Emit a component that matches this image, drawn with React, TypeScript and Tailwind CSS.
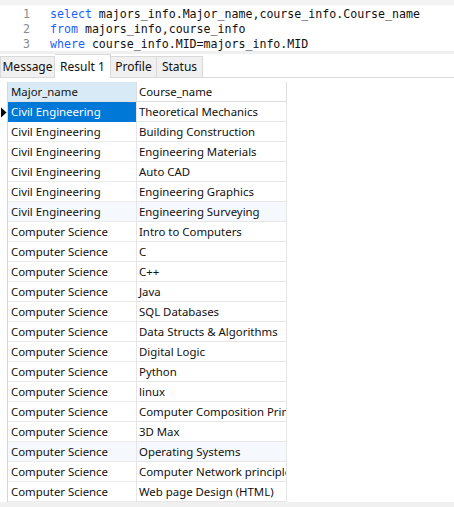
import React from "react";

const rows: [string, string][] = [
  ["Civil Engineering", "Theoretical Mechanics"],
  ["Civil Engineering", "Building Construction"],
  ["Civil Engineering", "Engineering Materials"],
  ["Civil Engineering", "Auto CAD"],
  ["Civil Engineering", "Engineering Graphics"],
  ["Civil Engineering", "Engineering Surveying"],
  ["Computer Science", "Intro to Computers"],
  ["Computer Science", "C"],
  ["Computer Science", "C++"],
  ["Computer Science", "Java"],
  ["Computer Science", "SQL Databases"],
  ["Computer Science", "Data Structs & Algorithms"],
  ["Computer Science", "Digital Logic"],
  ["Computer Science", "Python"],
  ["Computer Science", "linux"],
  ["Computer Science", "Computer Composition Principles"],
  ["Computer Science", "3D Max"],
  ["Computer Science", "Operating Systems"],
  ["Computer Science", "Computer Network principles"],
  ["Computer Science", "Web page Design (HTML)"],
];

const tinted = new Set([5, 17]);

export default function App() {
  const mono = { fontFamily: '"DejaVu Sans Mono", "Liberation Mono", monospace' };
  const ui = { fontFamily: '"Noto Sans", "Open Sans", sans-serif' };
  return (
    <div className="w-[454px] h-[507px] bg-white overflow-hidden flex flex-col" style={ui}>
      {/* editor */}
      <div className="h-[5px] bg-[#f3f3f3] shrink-0" />
      <div className="h-[46px] shrink-0 bg-white flex flex-col pt-[2px] text-[11.6px] leading-[15px]" style={mono}>
        {[
          [<span key="a"><span className="text-[#1a5fff]">select</span> majors_info.Major_name,course_info.Course_name</span>],
          [<span key="b"><span className="text-[#1a5fff]">from</span> majors_info,course_info</span>],
          [<span key="c"><span className="text-[#1a5fff]">where</span> course_info.MID=majors_info.MID</span>],
        ].map((l, i) => (
          <div key={i} className="flex h-[15px] items-center">
            <div className="w-[30px] text-right text-[#8a8a8a]">{i + 1}</div>
            <div className="pl-[20px] text-[#111] whitespace-pre">{l[0]}</div>
          </div>
        ))}
      </div>
      <div className="h-[3px] bg-[#f0f0f0] shrink-0" />
      {/* tabs */}
      <div className="h-[24px] shrink-0 flex items-end border-b border-[#d9d9d9] text-[12px] text-[#111]">
        <div className="w-[55px] h-[21px] bg-[#f0f0f0] border border-b-0 border-[#d9d9d9] flex items-center justify-center">Message</div>
        <div className="w-[56px] h-[24px] bg-white border border-b-0 border-l-0 border-[#d9d9d9] flex items-center justify-center -mb-px relative">Result 1</div>
        <div className="w-[46px] h-[21px] bg-[#f0f0f0] border border-b-0 border-l-0 border-[#d9d9d9] flex items-center justify-center">Profile</div>
        <div className="w-[46px] h-[21px] bg-[#f0f0f0] border border-b-0 border-l-0 border-[#d9d9d9] flex items-center justify-center">Status</div>
      </div>
      {/* grid */}
      <div className="pt-[4px] flex-1 text-[11.4px] text-[#111]">
        <div className="flex h-[20px]">
          <div className="w-[8px] shrink-0 border-r border-[#d6d6d6]" />
          <div className="w-[128px] shrink-0 bg-[#d9eaf7] border-b border-[#e0e0e0] pl-[3px] flex items-center">Major_name</div>
          <div className="w-[151px] shrink-0 border-l border-r border-b border-[#dcdcdc] pl-[2px] flex items-center">Course_name</div>
        </div>
        {rows.map(([a, b], i) => {
          const sel = i === 0;
          const tint = tinted.has(i);
          return (
            <div key={i} className="flex h-[20px]">
              <div className="w-[8px] shrink-0 border-r border-[#d6d6d6] flex items-center">
                {sel && (
                  <svg width="7" height="11" viewBox="0 0 7 11">
                    <path d="M1 0.5 L6.5 5.5 L1 10.5 Z" fill="#000" />
                  </svg>
                )}
              </div>
              <div
                className={
                  "w-[128px] shrink-0 pl-[3px] flex items-center whitespace-nowrap overflow-hidden border-b " +
                  (sel ? "bg-[#0078d7] text-white border-[#0078d7]" : tint ? "bg-[#f5f9fd] border-[#ececec]" : "bg-white border-[#ececec]")
                }
              >
                {a}
              </div>
              <div
                className={
                  "w-[151px] shrink-0 pl-[2px] flex items-center whitespace-nowrap overflow-hidden border-l border-r border-b border-[#e6e6e6] " +
                  (tint ? "bg-[#f5f9fd]" : "bg-white")
                }
              >
                {b}
              </div>
            </div>
          );
        })}
      </div>
      <div className="h-[6px] bg-[#f0f0f0] shrink-0" />
    </div>
  );
}
